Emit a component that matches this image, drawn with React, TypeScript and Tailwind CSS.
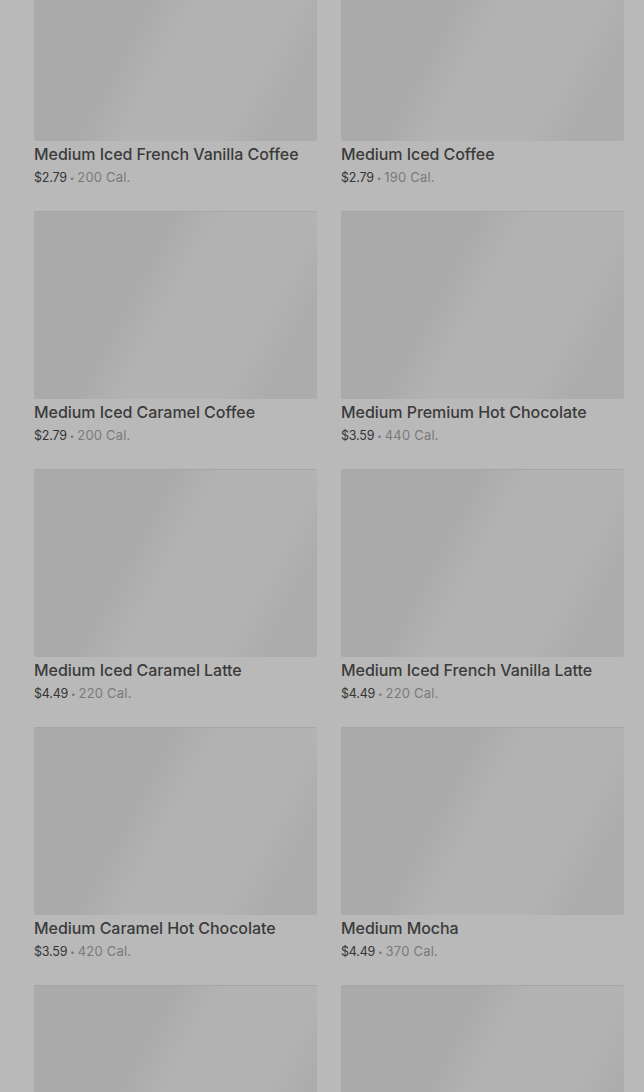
const items = [
  { name: "Medium Iced French Vanilla Coffee", price: "$2.79", cal: "200 Cal." },
  { name: "Medium Iced Coffee", price: "$2.79", cal: "190 Cal." },
  { name: "Medium Iced Caramel Coffee", price: "$2.79", cal: "200 Cal." },
  { name: "Medium Premium Hot Chocolate", price: "$3.59", cal: "440 Cal." },
  { name: "Medium Iced Caramel Latte", price: "$4.49", cal: "220 Cal." },
  { name: "Medium Iced French Vanilla Latte", price: "$4.49", cal: "220 Cal." },
  { name: "Medium Caramel Hot Chocolate", price: "$3.59", cal: "420 Cal." },
  { name: "Medium Mocha", price: "$4.49", cal: "370 Cal." },
  { name: "", price: "", cal: "" },
  { name: "", price: "", cal: "" },
]

function Card({ name, price, cal }: { name: string; price: string; cal: string }) {
  return (
    <div className="flex flex-col">
      <div className="h-[188px] rounded-[2px] border-t border-[#a5a5a5] bg-[linear-gradient(118deg,#aaaaaa_0%,#aaaaaa_36%,#b3b3b3_50%,#b3b3b3_74%,#acacac_86%,#acacac_100%)]" />
      {name && (
        <>
          <div className="pt-[3px] text-[16px] leading-[20px] font-medium text-[#3b3b3b] tracking-[-0.05px] whitespace-nowrap">
            {name}
          </div>
          <div className="h-[24px] overflow-hidden pt-[2px] text-[13px] leading-[22px] whitespace-nowrap">
            <span className="text-[12.5px] text-[#353535] tracking-[-0.2px]">{price}</span>
            <span className="mx-[3px] text-[8px] text-[#7a7a7a] align-middle">•</span>
            <span className="text-[#7a7a7a] tracking-[0.2px]">{cal}</span>
          </div>
        </>
      )}
    </div>
  )
}

export default function App() {
  return (
    <div className="w-[644px] h-[1092px] overflow-hidden bg-[#b9b9b9] font-['Inter',sans-serif]">
      <div className="mt-[-47px] pl-[34px] pr-[20px] grid grid-cols-2 gap-x-[24px] gap-y-[23px]">
        {items.map((it, i) => (
          <Card key={i} {...it} />
        ))}
      </div>
    </div>
  )
}
